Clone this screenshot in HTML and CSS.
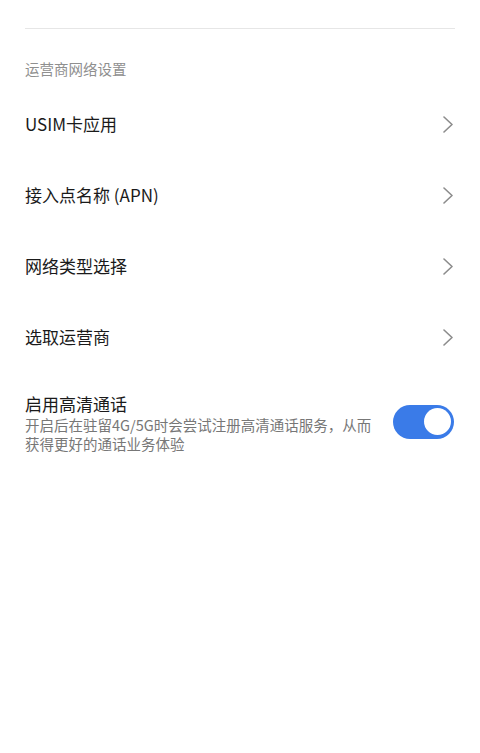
FILE: index.html
```html
<!DOCTYPE html>
<html lang="zh-CN">
<head>
<meta charset="utf-8">
<link rel="stylesheet" href="styles.css">
</head>
<body>
<div class="page">
  <div class="divider"></div>
  <div class="section-title">运营商网络设置</div>
  <div class="row">
    <span class="row-label">USIM卡应用</span>
    <svg class="chevron" width="10" height="17" viewBox="0 0 10 17"><polyline points="1,1 9,8.5 1,16" fill="none" stroke="#8c8c8c" stroke-width="1.6" stroke-linecap="round" stroke-linejoin="round"/></svg>
  </div>
  <div class="row">
    <span class="row-label">接入点名称 (APN)</span>
    <svg class="chevron" width="10" height="17" viewBox="0 0 10 17"><polyline points="1,1 9,8.5 1,16" fill="none" stroke="#8c8c8c" stroke-width="1.6" stroke-linecap="round" stroke-linejoin="round"/></svg>
  </div>
  <div class="row">
    <span class="row-label">网络类型选择</span>
    <svg class="chevron" width="10" height="17" viewBox="0 0 10 17"><polyline points="1,1 9,8.5 1,16" fill="none" stroke="#8c8c8c" stroke-width="1.6" stroke-linecap="round" stroke-linejoin="round"/></svg>
  </div>
  <div class="row">
    <span class="row-label">选取运营商</span>
    <svg class="chevron" width="10" height="17" viewBox="0 0 10 17"><polyline points="1,1 9,8.5 1,16" fill="none" stroke="#8c8c8c" stroke-width="1.6" stroke-linecap="round" stroke-linejoin="round"/></svg>
  </div>
  <div class="toggle-row">
    <div class="toggle-text">
      <div class="row-label">启用高清通话</div>
      <div class="row-desc">开启后在驻留4G/5G时会尝试注册高清通话服务，从而获得更好的通话业务体验</div>
    </div>
    <div class="switch on"><div class="knob"></div></div>
  </div>
</div>
</body>
</html>
```
FILE: styles.css
```css
html, body {
  margin: 0;
  padding: 0;
  background: #ffffff;
}
body {
  font-family: "Noto Sans CJK SC", "Noto Sans", sans-serif;
  color: #1a1a1a;
}
.page {
  padding: 28px 25px 0 25px;
}
.divider {
  height: 1px;
  background: #e6e6e6;
}
.section-title {
  font-size: 14.5px;
  line-height: 20px;
  color: #8f8f8f;
  padding-top: 30px;
  padding-bottom: 9.5px;
}
.row {
  height: 71px;
  display: flex;
  align-items: center;
  justify-content: space-between;
}
.row-label {
  font-size: 17px;
  line-height: 22px;
  color: #1a1a1a;
}
.chevron {
  display: block;
  margin-right: 2px;
}
.toggle-row {
  display: flex;
  align-items: center;
  justify-content: space-between;
  padding-top: 20.5px;
}
.toggle-text {
  width: 350px;
}
.row-desc {
  font-size: 14.5px;
  line-height: 19px;
  color: #777777;
}
.switch {
  width: 61px;
  height: 34px;
  border-radius: 17px;
  background: #3a7be8;
  display: flex;
  align-items: center;
  justify-content: flex-end;
  padding-right: 3.5px;
  box-sizing: border-box;
  margin-top: -3px;
  margin-right: 1px;
}
.knob {
  width: 27px;
  height: 27px;
  border-radius: 50%;
  background: #ffffff;
}
```
